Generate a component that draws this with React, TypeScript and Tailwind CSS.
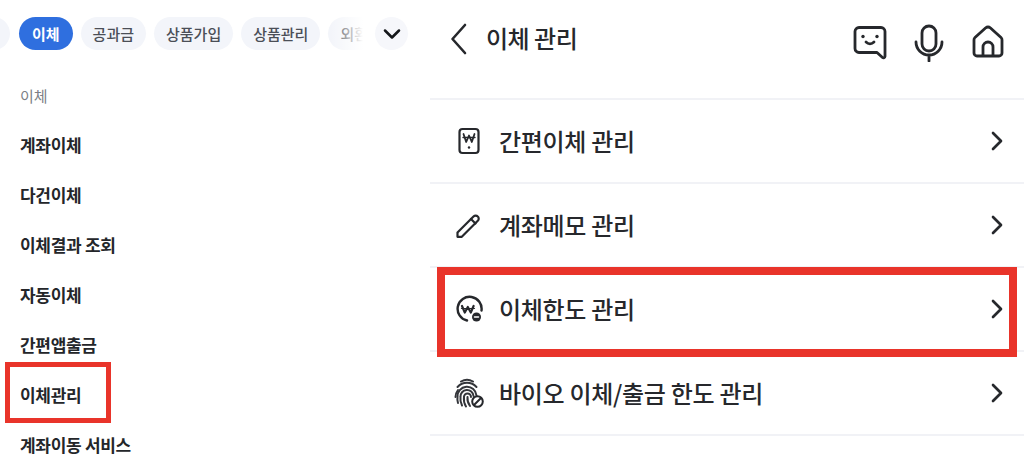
import { ChevronDown, ChevronRight } from "lucide-react";

const font = { fontFamily: '"Noto Sans CJK KR", "Noto Sans", sans-serif' };

const menuItems = ["계좌이체", "다건이체", "이체결과 조회", "자동이체", "간편앱출금", "이체관리", "계좌이동 서비스"];

const Chip = ({ label, active }: { label: string; active?: boolean }) => (
  <span
    className={
      active
        ? "h-[33px] shrink-0 rounded-full bg-[#2f6fdf] px-[13px] text-[15px] leading-[33px] font-bold text-white"
        : "h-[33px] shrink-0 rounded-full bg-[#f3f5fa] px-3 text-[15px] leading-[33px] font-medium text-[#4b4f57]"
    }
  >
    {label}
  </span>
);

const WonCardIcon = () => (
  <svg width="24" height="28" viewBox="0 0 24 28" fill="none" stroke="#26282c" strokeWidth="2.200" strokeLinecap="round" strokeLinejoin="round" className="ml-[-1px]">
    <rect x="2.500" y="2" width="19" height="24" rx="3" />
    <path d="M6.500 7l2.700 8 2.800-6.500 2.800 6.500 2.700-8" strokeWidth="1.800" />
    <path d="M6 10.500h12" strokeWidth="1.400" />
    <circle cx="12" cy="20.500" r="1.200" fill="#26282c" stroke="none" />
  </svg>
);

const PencilIcon = () => (
  <svg width="28" height="28" viewBox="0 0 28 28" fill="none" stroke="#26282c" strokeWidth="2.200" strokeLinecap="round" strokeLinejoin="round">
    <path d="M2.500 21.500l16-16a3 3 0 0 1 4.300 0a3 3 0 0 1 0 4.300l-16 16H2.500z" />
    <path d="M16 8l4.500 4.500" />
  </svg>
);

const LimitIcon = () => (
  <svg width="28" height="28" viewBox="0 0 28 28" fill="none" stroke="#26282c" strokeWidth="2.400" strokeLinecap="round" strokeLinejoin="round">
    <path d="M12 25.500a12 12 0 1 1 14.500-10" />
    <path d="M7 11l2.800 6.500 3-5.500 3 5.500 2.800-6.500" strokeWidth="2.200" />
    <path d="M6.500 13.500h13" strokeWidth="1.200" />
    <circle cx="21.500" cy="22" r="4.500" fill="#26282c" stroke="none" />
    <path d="M19.500 22h4" stroke="#ffffff" strokeWidth="1.500" />
  </svg>
);

const BioIcon = () => (
  <svg width="30" height="30" viewBox="0 0 30 30" fill="none" stroke="#33353a" strokeWidth="2" strokeLinecap="round">
    <path d="M7 3.500a12 12 0 0 1 12 0" />
    <path d="M3.500 9a13 13 0 0 1 19 0" />
    <path d="M1.500 19a12 12 0 0 1 2.500-7" />
    <path d="M4 25a14 14 0 0 1-.5-6a9.500 9.500 0 0 1 19-1.500" />
    <path d="M8 27.500a14 14 0 0 1-1.500-8.500a6.500 6.500 0 0 1 13 -1" />
    <path d="M12 28.500a14 14 0 0 1-2-9.500a3.500 3.500 0 0 1 7 0" />
    <path d="M16 28a13 13 0 0 1-2.500-9" />
    <circle cx="23.500" cy="23.500" r="5.300" fill="#ffffff" strokeWidth="2" stroke="#26282c" />
    <path d="M20 27l7-7" stroke="#26282c" strokeWidth="2" />
  </svg>
);

const rows = [
  { label: "간편이체 관리", icon: <WonCardIcon /> },
  { label: "계좌메모 관리", icon: <PencilIcon /> },
  { label: "이체한도 관리", icon: <LimitIcon /> },
  { label: "바이오 이체/출금 한도 관리", icon: <BioIcon /> },
];

export default function App() {
  return (
    <div className="relative flex h-[454px] w-[1024px] overflow-hidden bg-white" style={font}>
      {/* left: 전체메뉴 */}
      <div className="w-[430px] shrink-0">
        <div className="relative mt-[17px] flex h-[33px] items-center gap-2 overflow-hidden">
          <div className="ml-[-24px] h-[33px] w-[34px] shrink-0 rounded-full bg-[#f3f5fa]" />
          <div className="ml-[1px] flex gap-2">
            <Chip label="이체" active />
            <Chip label="공과금" />
            <Chip label="상품가입" />
            <Chip label="상품관리" />
            <Chip label="외환" />
          </div>
          <div className="absolute top-0 left-[330px] h-[33px] w-[33px] bg-gradient-to-r from-white/0 to-white" />
          <div className="absolute top-0 left-[363px] h-[33px] w-[67px] bg-white" />
          <div className="absolute top-0 left-[375px] flex h-[33px] w-[33px] items-center justify-center rounded-full bg-[#f6f7fb]">
            <ChevronDown size={28} strokeWidth={2.200} color="#15171a" />
          </div>
        </div>
        <div className="mt-[36px] pl-5 text-[15px] leading-5 font-normal text-[#7b7f86]">이체</div>
        <ul className="mt-[14px] pl-5">
          {menuItems.map((item) => (
            <li key={item} className="h-[50px] text-[17px] leading-[50px] font-bold tracking-[-0.3px] whitespace-nowrap text-[#24262a]">
              {item}
            </li>
          ))}
        </ul>
      </div>

      {/* right: 이체 관리 */}
      <div className="flex-1">
        <div className="flex h-[100px] items-start border-b-2 border-[#f1f2f6] pt-[24px] pr-[19px] pl-[20px]">
          <svg width="17" height="32" viewBox="0 0 17 32" fill="none" stroke="#26282c" strokeWidth="2.600" strokeLinecap="round" strokeLinejoin="round" className="mt-[-1px]">
            <path d="M15 2L2.500 16 15 30" />
          </svg>
          <span className="ml-[19px] mt-[-5px] text-[24px] leading-[38px] font-medium tracking-[-0.5px] text-[#26282c]">이체 관리</span>
          <div className="ml-auto flex items-center gap-[26px]">
            <svg width="36" height="38" viewBox="0 0 36 38" fill="none" stroke="#26282c" strokeWidth="2.800" strokeLinecap="round" strokeLinejoin="round">
              <path d="M7 3.500h22a4 4 0 0 1 4 4v25a1.500 1.500 0 0 1-2.500 1L25 28.500H7a4 4 0 0 1-4-4v-17a4 4 0 0 1 4-4z" />
              <path d="M14 18c2.300 2.300 5.700 2.300 8 0" />
              <circle cx="11" cy="12.500" r="1.700" fill="#26282c" stroke="none" />
              <circle cx="25" cy="12.500" r="1.700" fill="#26282c" stroke="none" />
            </svg>
            <svg width="32" height="38" viewBox="0 0 32 38" fill="none" stroke="#26282c" strokeWidth="2.800" strokeLinecap="round" strokeLinejoin="round" className="ml-[-1px]">
              <rect x="9" y="2" width="14" height="25" rx="7" />
              <path d="M3 18a13 13 0 0 0 26 0M16 31v6" />
            </svg>
            <svg width="34" height="38" viewBox="0 0 34 38" fill="none" stroke="#26282c" strokeWidth="2.800" strokeLinecap="round" strokeLinejoin="round">
              <path d="M4 13.500L14.500 4a4 4 0 0 1 5 0L30 13.500a3 3 0 0 1 1 2.500v13a3 3 0 0 1-3 3H6a3 3 0 0 1-3-3V16a3 3 0 0 1 1-2.500z" />
              <path d="M12 31.500V23a5 5 0 0 1 10 0v8.500" />
            </svg>
          </div>
        </div>
        {rows.map((row) => (
          <div key={row.label} className="flex h-[84px] items-center border-b-2 border-[#f1f2f6] pr-[11px] pl-[24px]">
            <span className="flex w-[30px] shrink-0 justify-center">{row.icon}</span>
            <span className="ml-[15px] text-[24px] font-medium tracking-[-0.3px] whitespace-nowrap text-[#26282c]">{row.label}</span>
            <ChevronRight size={32} strokeWidth={2} color="#26282c" className="ml-auto" />
          </div>
        ))}
      </div>

      {/* red highlight boxes */}
      <div className="absolute top-[362px] left-[5px] h-[61px] w-[106px] border-[5px] border-[#e9342a]" />
      <div className="absolute top-[267px] left-[437px] h-[90px] w-[580px] border-[8px] border-[#e9342a]" />
    </div>
  );
}
